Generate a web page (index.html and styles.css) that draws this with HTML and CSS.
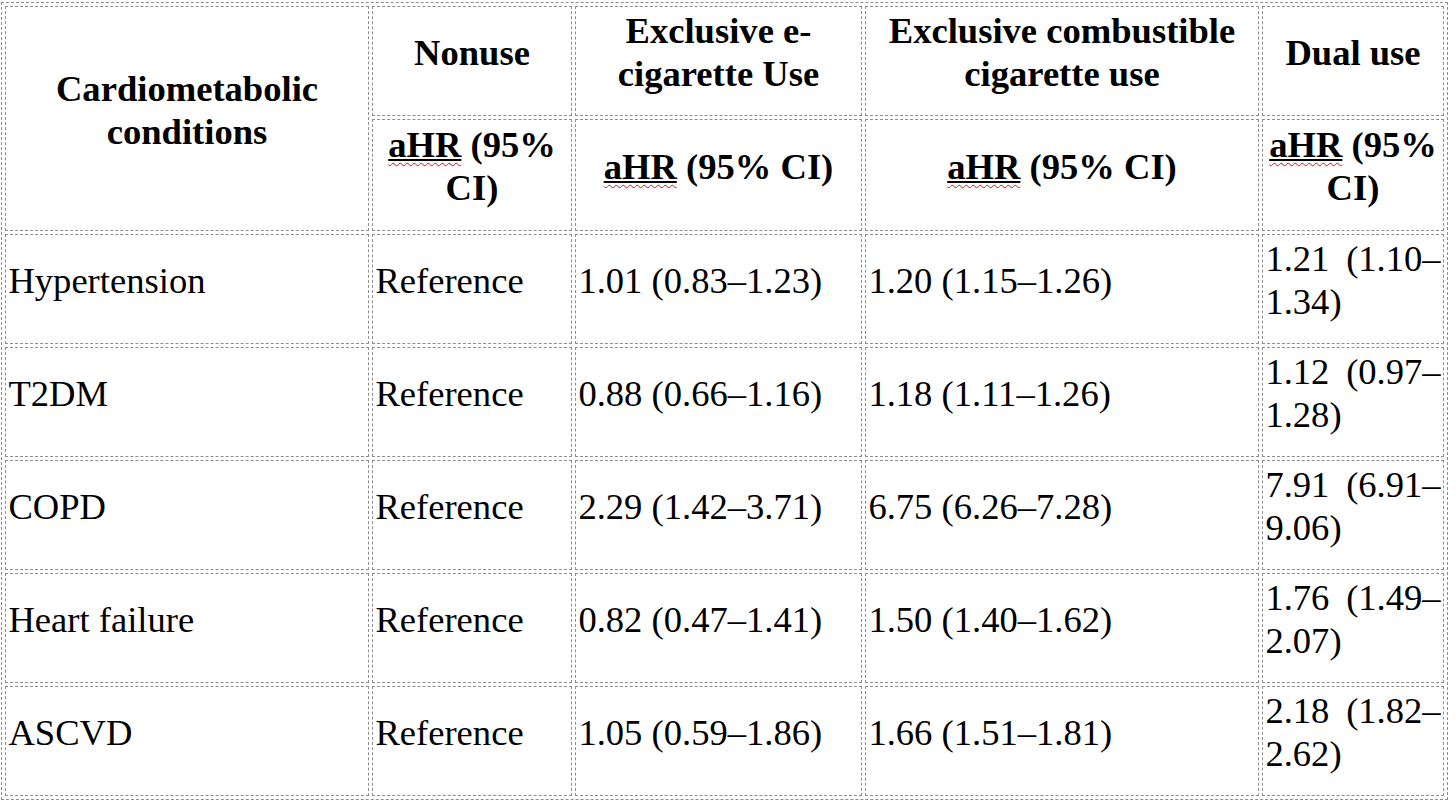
FILE: index.html
```html
<!DOCTYPE html>
<html lang="en">
<head>
<meta charset="utf-8">
<title>Cardiometabolic conditions</title>
<link rel="stylesheet" href="styles.css">
</head>
<body>
<table class="grid">
  <colgroup>
    <col class="c1"><col class="c2"><col class="c3"><col class="c4"><col class="c5">
  </colgroup>
  <thead>
    <tr class="h1">
      <th rowspan="2"><p>Cardiometabolic conditions</p></th>
      <th><p>Nonuse</p></th>
      <th><p>Exclusive e-cigarette Use</p></th>
      <th><p>Exclusive combustible cigarette use</p></th>
      <th><p>Dual use</p></th>
    </tr>
    <tr class="h2">
      <th><p><span class="ul"><span class="spell">aHR</span></span> (95% CI)</p></th>
      <th><p><span class="ul"><span class="spell">aHR</span></span> (95% CI)</p></th>
      <th><p><span class="ul"><span class="spell">aHR</span></span> (95% CI)</p></th>
      <th><p><span class="ul"><span class="spell">aHR</span></span> (95% CI)</p></th>
    </tr>
  </thead>
  <tbody>
    <tr>
      <td><p>Hypertension</p></td>
      <td><p>Reference</p></td>
      <td><p>1.01 (0.83–1.23)</p></td>
      <td><p>1.20 (1.15–1.26)</p></td>
      <td><p>1.21 (1.10–1.34)</p></td>
    </tr>
    <tr>
      <td><p>T2DM</p></td>
      <td><p>Reference</p></td>
      <td><p>0.88 (0.66–1.16)</p></td>
      <td><p>1.18 (1.11–1.26)</p></td>
      <td><p>1.12 (0.97–1.28)</p></td>
    </tr>
    <tr>
      <td><p>COPD</p></td>
      <td><p>Reference</p></td>
      <td><p>2.29 (1.42–3.71)</p></td>
      <td><p>6.75 (6.26–7.28)</p></td>
      <td><p>7.91 (6.91–9.06)</p></td>
    </tr>
    <tr>
      <td><p>Heart failure</p></td>
      <td><p>Reference</p></td>
      <td><p>0.82 (0.47–1.41)</p></td>
      <td><p>1.50 (1.40–1.62)</p></td>
      <td><p>1.76 (1.49–2.07)</p></td>
    </tr>
    <tr>
      <td><p>ASCVD</p></td>
      <td><p>Reference</p></td>
      <td><p>1.05 (0.59–1.86)</p></td>
      <td><p>1.66 (1.51–1.81)</p></td>
      <td><p>2.18 (1.82–2.62)</p></td>
    </tr>
  </tbody>
</table>
</body>
</html>
```

FILE: styles.css
```css
html, body {
  background: #ffffff;
}
body {
  margin: 2px 0 0 1px;
  font-family: "Liberation Serif", "Times New Roman", serif;
  font-size: 36.6px;
  color: #000000;
}
.grid {
  width: 1447px;
  table-layout: fixed;
  border-collapse: separate;
  border-spacing: 3px;
  border: 1px dashed #8f8f8f;
}
.c1 { width: 364px; }
.c2 { width: 200px; }
.c3 { width: 287px; }
.c4 { width: 394px; }
.c5 { width: 182px; }

.grid th,
.grid td {
  box-sizing: border-box;
  border: 1px dashed #8f8f8f;
  padding: 0 2.4px;
  vertical-align: middle;
  line-height: normal;
}
.grid th {
  font-weight: bold;
  text-align: center;
}
.grid td {
  font-weight: normal;
  text-align: justify;
}
.grid p {
  margin: 0 0 18px 0;
}
.h1 th { height: 110px; }
.h2 th { height: 112px; }
.grid tbody td { height: 110px; }

.ul {
  text-decoration: underline solid #000000;
  text-decoration-thickness: 1.5px;
  text-underline-offset: 2px;
}
.spell {
  text-decoration: underline wavy #e01010;
  text-decoration-thickness: 1px;
  text-underline-offset: 5px;
}
```
